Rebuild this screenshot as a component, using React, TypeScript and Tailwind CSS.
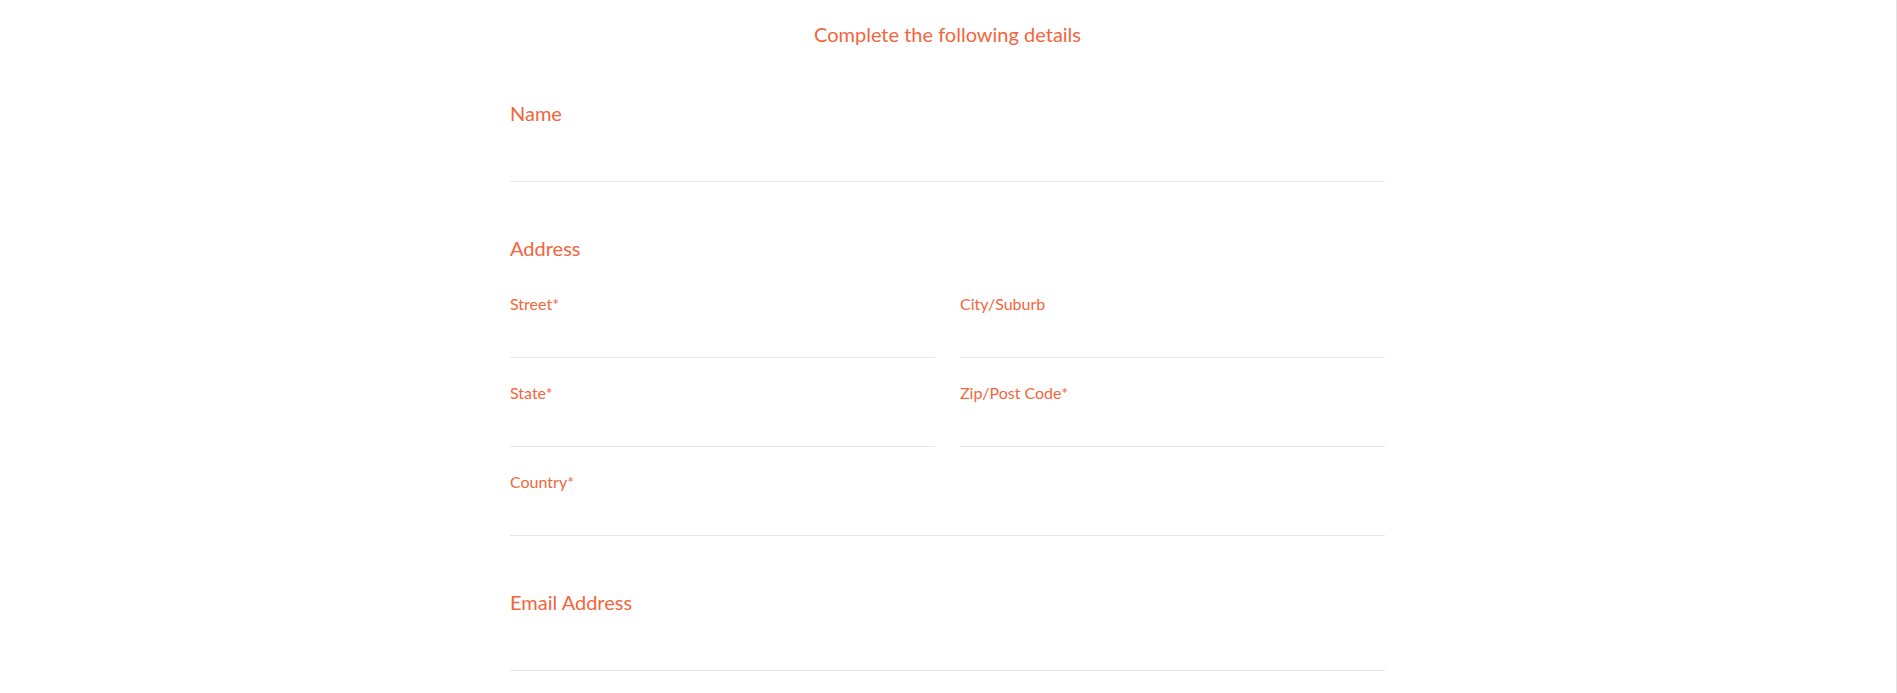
import { useState } from "react";

const font = { fontFamily: "Lato, 'Liberation Sans', sans-serif" };

type FieldProps = {
  label: string;
  name: string;
  value: string;
  onChange: (name: string, v: string) => void;
};

const Field = ({ label, name, value, onChange }: FieldProps) => (
  <label className="flex flex-col">
    <span className="text-[16px] leading-[20px] text-[#f2653d]">{label}</span>
    <input
      type="text"
      value={value}
      onChange={(e) => onChange(name, e.target.value)}
      className="h-[44px] w-full bg-transparent border-b border-[#e6e6e6] text-[16px] text-gray-700 focus:outline-none"
    />
  </label>
);

export default function App() {
  const [form, setForm] = useState<Record<string, string>>({});
  const set = (name: string, v: string) => setForm((f) => ({ ...f, [name]: v }));

  return (
    <div className="min-h-[693px] bg-white border-r border-[#e4e4e4]" style={font}>
      <div className="ml-[510px] w-[875px] flex flex-col">
        {/* Heading */}
        <h1 className="text-center text-[20px] leading-[28px] pt-[20px] text-[#f2653d] font-normal">
          Complete the following details
        </h1>

        {/* Name */}
        <div className="mt-[52px] flex flex-col">
          <span className="text-[20px] leading-[26px] text-[#f2653d]">Name</span>
          <input
            type="text"
            value={form.name ?? ""}
            onChange={(e) => set("name", e.target.value)}
            className="h-[56px] w-full bg-transparent border-b border-[#e6e6e6] focus:outline-none"
          />
        </div>

        {/* Address */}
        <div className="mt-[53px] flex flex-col">
          <span className="text-[20px] leading-[26px] text-[#f2653d]">Address</span>
          <div className="mt-[33px] grid grid-cols-2 gap-x-[25px] gap-y-[25px]">
            <Field label="Street*" name="street" value={form.street ?? ""} onChange={set} />
            <Field label="City/Suburb" name="city" value={form.city ?? ""} onChange={set} />
            <Field label="State*" name="state" value={form.state ?? ""} onChange={set} />
            <Field label="Zip/Post Code*" name="zip" value={form.zip ?? ""} onChange={set} />
            <div className="col-span-2">
              <Field label="Country*" name="country" value={form.country ?? ""} onChange={set} />
            </div>
          </div>
        </div>

        {/* Email */}
        <div className="mt-[53px] flex flex-col">
          <span className="text-[20px] leading-[26px] text-[#f2653d]">Email Address</span>
          <input
            type="email"
            value={form.email ?? ""}
            onChange={(e) => set("email", e.target.value)}
            className="h-[56px] w-full bg-transparent border-b border-[#e6e6e6] focus:outline-none"
          />
        </div>
      </div>
    </div>
  );
}
